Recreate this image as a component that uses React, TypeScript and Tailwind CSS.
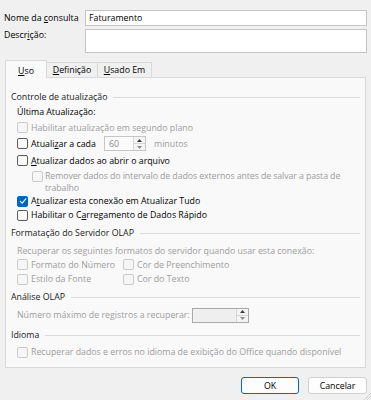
import React from "react";

type CkProps = { checked?: boolean; disabled?: boolean };

const Check = ({ checked = false, disabled = false }: CkProps) => (
  <span
    className={`w-[11px] h-[11px] rounded-[2px] border shrink-0 flex items-center justify-center ${
      checked
        ? "bg-[#0067c0] border-[#0067c0]"
        : disabled
        ? "bg-[#f6f6f6] border-[#cacaca]"
        : "bg-[#fbfbfb] border-[#5a5a5a]"
    }`}
  >
    {checked && (
      <svg width="8" height="8" viewBox="0 0 8 8">
        <path
          d="M1.3 4.3 L3.2 6.1 L6.8 1.9"
          stroke="white"
          strokeWidth="1.1"
          fill="none"
          strokeLinecap="round"
          strokeLinejoin="round"
        />
      </svg>
    )}
  </span>
);

const Group = ({ title, className = "" }: { title: string; className?: string }) => (
  <div className={`flex items-center h-[14px] pl-[5px] pr-[5px] ${className}`}>
    <span className="text-[#1a1a1a]">{title}</span>
    <div className="flex-1 h-px bg-[#dcdcdc] ml-[6px]" />
  </div>
);

const Arrow = ({ up, color }: { up?: boolean; color: string }) => (
  <svg width="5" height="3" viewBox="0 0 5 3">
    {up ? <path d="M0 3 L2.5 0 L5 3 Z" fill={color} /> : <path d="M0 0 L2.5 3 L5 0 Z" fill={color} />}
  </svg>
);

const Spin = ({
  value,
  width,
  disabled,
}: {
  value: string;
  width: string;
  disabled?: boolean;
}) => (
  <div
    className={`flex h-[15px] border ${width} ${
      disabled ? "bg-[#efefef] border-[#a9a9a9]" : "bg-[#fbfbfb] border-[#c6c6c6]"
    }`}
  >
    <div className="flex-1 flex items-center pl-[4px] text-[#8a8a8a]">{value}</div>
    <div className="w-[12px] flex flex-col bg-[#f4f4f4] border-l border-[#d6d6d6]">
      <div className="flex-1 flex items-center justify-center border-b border-[#d6d6d6]">
        <Arrow up color="#3c3c3c" />
      </div>
      <div className="flex-1 flex items-center justify-center">
        <Arrow color="#8c8c8c" />
      </div>
    </div>
  </div>
);

const U = ({ children }: { children: React.ReactNode }) => (
  <span className="underline underline-offset-[1px]">{children}</span>
);

export default function App() {
  return (
    <div className="relative w-[371px] h-[400px] overflow-hidden bg-[#f0f0f0] text-black font-['Open_Sans',sans-serif] text-[8.8px] leading-[12px] pt-[10px]">
      {/* Nome da consulta */}
      <div className="flex items-center h-[16px]">
        <div className="w-[85px] pl-[4px]">
          Nome da <U>c</U>onsulta
        </div>
        <div className="w-[282px] h-[16px] bg-white border border-[#c4c4c4] flex items-center pl-[3px]">
          Faturamento
        </div>
      </div>
      {/* Descrição */}
      <div className="flex items-start mt-[3px] h-[24px]">
        <div className="w-[85px] pl-[4px]">
          Descr<U>i</U>ção:
        </div>
        <div className="w-[282px] h-[24px] bg-white border border-[#c4c4c4]" />
      </div>

      {/* Tabs */}
      <div className="flex items-end h-[17px] mt-[7px] pl-[5px]">
        <div className="relative z-10 w-[42px] h-[18px] -mb-px bg-[#f9f9f9] border border-b-0 border-[#d9d9d9] flex items-center justify-center pt-[2px]">
          <U>U</U>so
        </div>
        <div className="w-[51px] h-[15px] border border-l-0 border-b-0 border-[#d9d9d9] flex items-center justify-center">
          <U>D</U>efinição
        </div>
        <div className="w-[54px] h-[15px] border border-l-0 border-b-0 border-[#d9d9d9] flex items-center justify-center">
          <U>U</U>sado Em
        </div>
      </div>

      {/* Panel */}
      <div className="ml-[5px] w-[361px] h-[291px] bg-[#f9f9f9] border border-[#d9d9d9]">
        <Group title="Controle de atualização" className="mt-[12px]" />
        <div className="h-[16px] flex items-center pl-[11px]">Última Atualização:</div>
        <div className="h-[15px] flex items-center pl-[11px] text-[#9d9d9d]">
          <Check disabled />
          <span className="ml-[3px]">Habilitar atualização em segundo plano</span>
        </div>
        <div className="h-[17px] flex items-center pl-[11px]">
          <Check />
          <span className="ml-[3px] w-[73px]">
            Atuali<U>z</U>ar a cada
          </span>
          <Spin value="60" width="w-[42px]" />
          <span className="ml-[8px] text-[#9d9d9d]">minutos</span>
        </div>
        <div className="h-[17px] flex items-center pl-[11px]">
          <Check />
          <span className="ml-[3px]">
            <U>A</U>tualizar dados ao abrir o arquivo
          </span>
        </div>
        <div className="mt-px h-[24px] flex items-start pl-[26px] text-[#9d9d9d]">
          <div className="mt-[0.5px]">
            <Check disabled />
          </div>
          <span className="ml-[2px] whitespace-nowrap tracking-[-0.1px]">
            Remover dados do intervalo de dados externos antes de salvar a pasta de
            <br />
            trabalho
          </span>
        </div>
        <div className="h-[14px] flex items-center pl-[11px]">
          <Check checked />
          <span className="ml-[3px]">
            A<U>t</U>ualizar esta conexão em Atualizar Tudo
          </span>
        </div>
        <div className="h-[14px] flex items-center pl-[11px]">
          <Check />
          <span className="ml-[3px]">
            Habilitar o C<U>a</U>rregamento de Dados Rápido
          </span>
        </div>

        <Group title="Formatação do Servidor OLAP" className="mt-[4px]" />
        <div className="mt-[4px] h-[13px] flex items-center pl-[11px] text-[#9d9d9d]">
          Recuperar os seguintes formatos do servidor quando usar esta conexão:
        </div>
        <div className="h-[15px] flex items-center pl-[11px] text-[#9d9d9d]">
          <div className="w-[106px] flex items-center">
            <Check disabled />
            <span className="ml-[3px]">Formato do Número</span>
          </div>
          <Check disabled />
          <span className="ml-[3px]">Cor de Preenchimento</span>
        </div>
        <div className="h-[14px] flex items-center pl-[11px] text-[#9d9d9d]">
          <div className="w-[106px] flex items-center">
            <Check disabled />
            <span className="ml-[3px]">Estilo da Fonte</span>
          </div>
          <Check disabled />
          <span className="ml-[3px]">Cor do Texto</span>
        </div>

        <Group title="Análise OLAP" className="mt-[4px]" />
        <div className="mt-[3px] h-[16px] flex items-center pl-[11px] text-[#9d9d9d]">
          <span className="w-[175px]">Número máximo de registros a recuperar:</span>
          <Spin value="" width="w-[57px]" disabled />
        </div>

        <Group title="Idioma" className="mt-[5px]" />
        <div className="mt-[3px] h-[14px] flex items-center pl-[11px] text-[#9d9d9d]">
          <Check disabled />
          <span className="ml-[3px]">
            Recuperar dados e erros no idioma de exibição do Office quando disponível
          </span>
        </div>
      </div>

      {/* Buttons */}
      <div className="flex justify-end pr-[4px] mt-[9px] gap-[9px]">
        <div className="w-[58px] h-[17px] rounded-[3px] bg-[#fdfdfd] border border-[#0067c0] flex items-center justify-center">
          OK
        </div>
        <div className="w-[59px] h-[17px] rounded-[3px] bg-[#fdfdfd] border border-[#d0d0d0] flex items-center justify-center">
          Cancelar
        </div>
      </div>

      {/* Resize grip */}
      <svg className="absolute right-0 bottom-0" width="8" height="8" viewBox="0 0 8 8">
        <path d="M8 1 L1 8" stroke="#9a9a9a" strokeWidth="0.8" strokeDasharray="1 1" />
        <path d="M8 4 L4 8" stroke="#9a9a9a" strokeWidth="0.8" strokeDasharray="1 1" />
      </svg>
    </div>
  );
}
